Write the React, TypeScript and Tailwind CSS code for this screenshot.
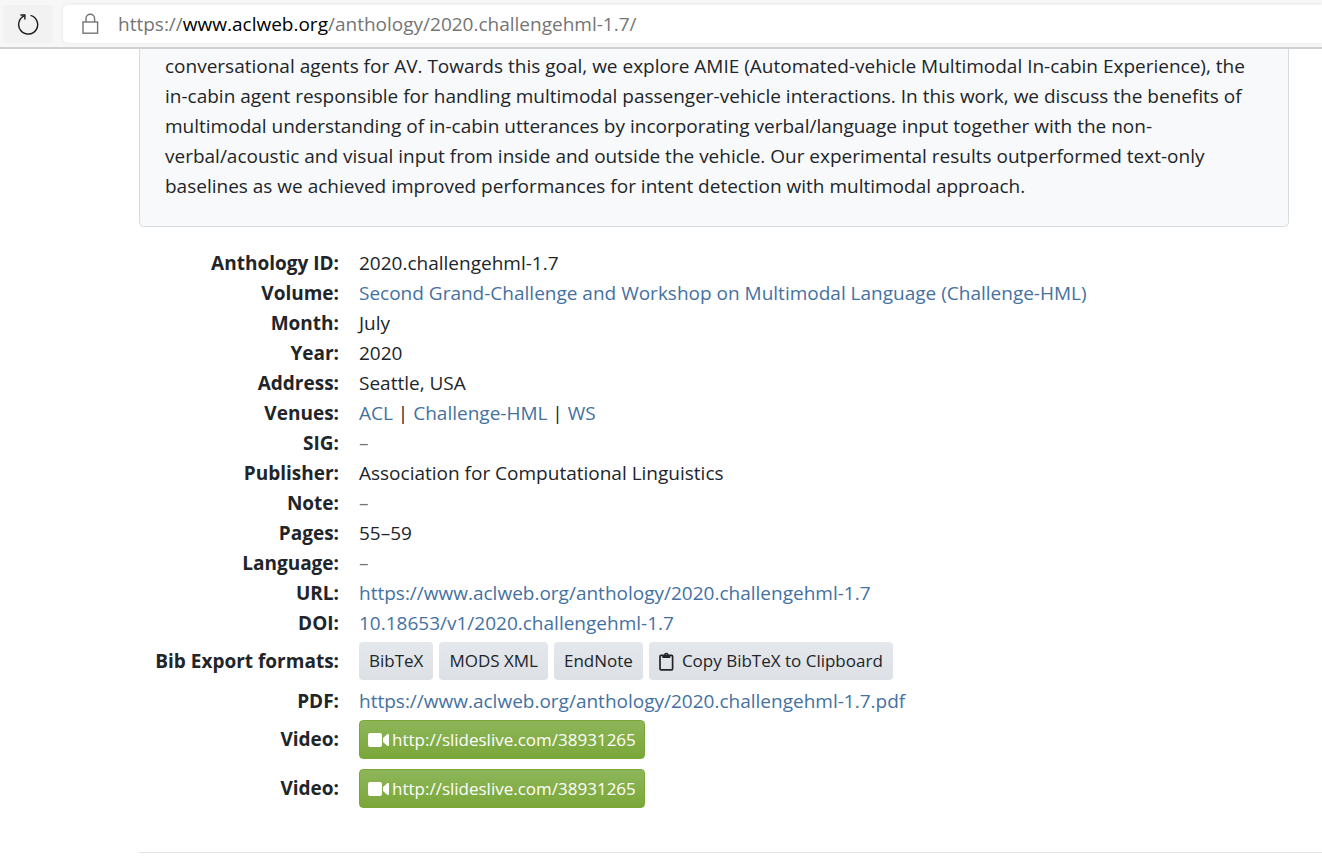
import type { ReactNode } from "react";

const PAPER_URL = "https://www.aclweb.org/anthology/2020.challengehml-1.7";
const VIDEO_URL = "http://slideslive.com/38931265";

const exportButton =
  "flex h-[38px] items-center rounded-[4px] bg-linear-to-b from-[#e4e7eb] to-[#dde1e5] px-[10px] text-[17px] leading-[30px] text-[#212529]";

function Link({ href, children }: { href: string; children: ReactNode }) {
  return (
    <a href={href} className="text-[#4571a1] hover:underline">
      {children}
    </a>
  );
}

function Field({ label, children }: { label: string; children: ReactNode }) {
  return (
    <>
      <dt className="text-right font-bold">{label}</dt>
      <dd>{children}</dd>
    </>
  );
}

function Empty() {
  return <span className="text-[#6c757d]">–</span>;
}

function VideoField() {
  return (
    <>
      <dt className="pt-1 pb-[6px] text-right leading-[39px] font-bold">Video:</dt>
      <dd className="pt-1 pb-[6px]">
        <a
          href={VIDEO_URL}
          className="inline-flex h-[39px] items-center gap-[3px] rounded-[4px] border border-[#7aa738] bg-linear-to-b from-[#8eb659] to-[#7aa738] px-2 align-top text-[17px] text-white"
        >
          <svg width="21" height="16" viewBox="0 0 21 16" fill="currentColor" aria-hidden="true">
            <rect x="0" y="1" width="14" height="14" rx="2" />
            <path d="M15 6 19.2 2.3C20 1.7 21 2.2 21 3.1V12.9C21 13.8 20 14.3 19.2 13.7L15 10Z" />
          </svg>
          {VIDEO_URL}
        </a>
      </dd>
    </>
  );
}

function AddressBar() {
  return (
    <header className="flex h-[49px] items-center border-b-2 border-[#d0d0d0] bg-[#f7f7f7] pl-[3px]">
      <button
        type="button"
        aria-label="Refresh"
        className="flex h-[38px] w-[50px] items-center justify-center rounded-[3px] bg-[#f2f2f2] text-[#1b1b1b]"
      >
        <svg width="22" height="22" viewBox="0 0 22 22" fill="none" stroke="currentColor" strokeWidth="1.4" aria-hidden="true">
          <path d="M13.6 2.4A9.5 9.5 0 1 1 7.8 2.7" />
          <path d="M3.4 2H7.9V6.5" />
        </svg>
      </button>
      <div className="ml-[10px] flex h-[38px] min-w-0 flex-1 items-center rounded-l-[5px] bg-white pl-[19px] shadow-[0_0_4px_rgba(0,0,0,0.07)]">
        <svg width="17" height="22" viewBox="0 0 17 22" fill="none" stroke="#757575" strokeWidth="1.4" aria-hidden="true">
          <rect x="1" y="9" width="14.6" height="11.2" />
          <path d="M4 9V5.5A4.3 4.3 0 0 1 12.6 5.5V9" />
        </svg>
        <div
          role="textbox"
          aria-label="Address"
          contentEditable
          suppressContentEditableWarning
          spellCheck={false}
          className="ml-[19px] flex-1 whitespace-nowrap text-[#757575] outline-none"
        >
          https://<span className="text-black">www.aclweb.org</span>/anthology/2020.challengehml-1.7/
        </div>
      </div>
    </header>
  );
}

export default function App() {
  return (
    <div className="min-h-screen overflow-x-hidden bg-white font-['Open_Sans','Noto_Sans',sans-serif] text-[19px] leading-[30px] text-[#212529]">
      <AddressBar />
      <main className="pl-[139px]">
        <section className="mr-[33px] rounded-b-[5px] border border-t-0 border-[#d8dbde] bg-[#f8f9fa] px-[25px] pt-[2px] pb-[25px]">
          <p>
            conversational agents for AV. Towards this goal, we explore AMIE (Automated-vehicle Multimodal In-cabin Experience), the
            in-cabin agent responsible for handling multimodal passenger-vehicle interactions. In this work, we discuss the benefits of
            multimodal understanding of in-cabin utterances by incorporating verbal/language input together with the non-verbal/acoustic
            and visual input from inside and outside the vehicle. Our experimental results outperformed text-only baselines as we
            achieved improved performances for intent detection with multimodal approach.
          </p>
        </section>

        <dl className="mt-[21px] mr-[33px] grid grid-cols-[200px_1fr] gap-x-5">
          <Field label="Anthology ID:">2020.challengehml-1.7</Field>
          <Field label="Volume:">
            <Link href="#volume">Second Grand-Challenge and Workshop on Multimodal Language (Challenge-HML)</Link>
          </Field>
          <Field label="Month:">July</Field>
          <Field label="Year:">2020</Field>
          <Field label="Address:">Seattle, USA</Field>
          <Field label="Venues:">
            <Link href="#acl">ACL</Link> | <Link href="#challenge-hml">Challenge-HML</Link> | <Link href="#ws">WS</Link>
          </Field>
          <Field label="SIG:">
            <Empty />
          </Field>
          <Field label="Publisher:">Association for Computational Linguistics</Field>
          <Field label="Note:">
            <Empty />
          </Field>
          <Field label="Pages:">55–59</Field>
          <Field label="Language:">
            <Empty />
          </Field>
          <Field label="URL:">
            <Link href={PAPER_URL}>{PAPER_URL}</Link>
          </Field>
          <Field label="DOI:">
            <Link href="#doi">10.18653/v1/2020.challengehml-1.7</Link>
          </Field>

          <dt className="pt-1 pb-[6px] text-right leading-[38px] font-bold">Bib Export formats:</dt>
          <dd className="flex flex-wrap gap-[6px] pt-1 pb-[6px]">
            <a href="#bibtex" className={exportButton}>
              BibTeX
            </a>
            <a href="#mods" className={exportButton}>
              MODS XML
            </a>
            <a href="#endnote" className={exportButton}>
              EndNote
            </a>
            <button type="button" className={exportButton}>
              <svg width="15" height="19" viewBox="0 0 15 19" fill="none" aria-hidden="true" className="mr-2">
                <rect x="1" y="3.4" width="12.6" height="14.4" rx="1" stroke="currentColor" strokeWidth="1.7" />
                <path
                  fill="currentColor"
                  fillRule="evenodd"
                  d="M3.3 3H5A2.3 2.3 0 0 1 9.6 3H11.3V5.5Q11.3 6 10.8 6H3.8Q3.3 6 3.3 5.5ZM7.3 2.1A.8.8 0 1 0 7.3 3.7A.8.8 0 1 0 7.3 2.1Z"
                />
              </svg>
              Copy BibTeX to Clipboard
            </button>
          </dd>

          <Field label="PDF:">
            <Link href={`${PAPER_URL}.pdf`}>{PAPER_URL}.pdf</Link>
          </Field>
          <VideoField />
          <VideoField />
        </dl>

        <hr className="mt-[38px] border-t border-[#e3e3e3]" />
      </main>
    </div>
  );
}
